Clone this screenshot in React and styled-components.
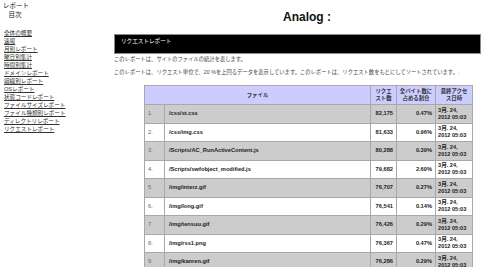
import React from "react";
import styled, { createGlobalStyle } from "styled-components";

const Global = createGlobalStyle`
  html, body { margin: 0; padding: 0; background: #fff; }
  body { font-family: "Liberation Sans", "Noto Sans CJK JP", sans-serif; color: #222; }
`;

const Page = styled.div`
  display: flex;
  width: 500px;
  height: 267px;
  overflow: hidden;
`;

const Sidebar = styled.nav`
  width: 114px;
  flex: none;
  padding: 1px 0 0 4px;
  box-sizing: border-box;
`;

const SideHead = styled.div`
  width: 24px;
  text-align: center;
  font-size: 6.5px;
  line-height: 9px;
  color: #111;
  margin-left: -1px;
  white-space: nowrap;
`;

const LinkList = styled.ul`
  list-style: none;
  margin: 10px 0 0;
  padding: 0;
  display: flex;
  flex-direction: column;
  font-size: 5.6px;
  line-height: 8px;
`;

const LinkItem = styled.li`
  height: 8px;
  line-height: 8px;
`;

const SideLink = styled.a`
  font-size: 5.6px;
  line-height: 8px;
  color: #333;
  text-decoration: underline;
  white-space: nowrap;
`;

const Main = styled.main`
  flex: 1;
  display: flex;
  flex-direction: column;
`;

const Title = styled.h1`
  margin: 10px 0 0;
  text-align: center;
  font-size: 12px;
  line-height: 14px;
  font-weight: bold;
  color: #111;
`;

const SectionBar = styled.div`
  margin-top: 10px;
  width: 367px;
  height: 20px;
  flex: none;
  box-sizing: border-box;
  background: #000;
  border: 1px solid #8a8a8a;
  color: #fff;
  font-size: 5.6px;
  line-height: 8px;
  padding: 2px 0 0 6px;
`;

const Note = styled.p`
  margin: 0;
  font-size: 5.3px;
  line-height: 8px;
  color: #444;
  white-space: nowrap;
`;

const Notes = styled.div`
  display: flex;
  flex-direction: column;
  gap: 5px;
  margin-top: 1px;
`;

const Table = styled.table`
  margin: 9px 0 0 30px;
  border-collapse: collapse;
  width: 329px;
  table-layout: fixed;
  font-size: 5.7px;
`;

const Th = styled.th`
  background: #ccccff;
  border: 1px solid #a8a8a8;
  height: 18px;
  font-weight: bold;
  font-size: 5.4px;
  line-height: 7px;
  color: #333;
  padding: 0 2px;
  text-align: center;
  vertical-align: middle;
`;

const Tr = styled.tr`
  background: ${(p) => (p.$shade ? "#cccccc" : "#ffffff")};
  height: 18.5px;
`;

const Td = styled.td`
  border: 1px solid #a8a8a8;
  padding: 0 ${(p) => p.$pr || 3}px 0 ${(p) => p.$pl || 3}px;
  text-align: ${(p) => p.$align || "left"};
  font-weight: ${(p) => (p.$bold ? "bold" : "normal")};
  color: ${(p) => (p.$bold ? "#222" : "#666")};
  line-height: 7px;
  vertical-align: middle;
  white-space: nowrap;
`;

const DateCell = styled(Td)`
  font-size: 5.6px;
`;

const links = [
  "全体の概要",
  "速報",
  "月別レポート",
  "曜日別集計",
  "時間別集計",
  "ドメインレポート",
  "組織別レポート",
  "OSレポート",
  "状態コードレポート",
  "ファイルサイズレポート",
  "ファイル種類別レポート",
  "ディレクトリレポート",
  "リクエストレポート",
];

const rows = [
  ["/css/st.css", "82,175", "0.47%"],
  ["/css/img.css", "81,633", "0.96%"],
  ["/Scripts/AC_RunActiveContent.js", "80,288", "0.39%"],
  ["/Scripts/swfobject_modified.js", "79,682", "2.60%"],
  ["/img/interz.gif", "76,707", "0.27%"],
  ["/img/long.gif", "76,541", "0.14%"],
  ["/img/tensuu.gif", "76,426", "0.29%"],
  ["/img/rss1.png", "76,367", "0.47%"],
  ["/img/kanren.gif", "76,286", "0.29%"],
];

export default function App() {
  return (
    <>
      <Global />
      <Page>
        <Sidebar>
          <SideHead>レポート<br />目次</SideHead>
          <LinkList>
            {links.map((l) => (
              <LinkItem key={l}>
                <SideLink href="#">{l}</SideLink>
              </LinkItem>
            ))}
          </LinkList>
        </Sidebar>
        <Main>
          <Title>Analog :</Title>
          <SectionBar>リクエストレポート</SectionBar>
          <Notes>
            <Note>このレポートは、サイトのファイルの統計を表します。</Note>
            <Note>
              このレポートは、リクエスト単位で、20 %を上回るデータを表示しています。このレポートは、リクエスト数をもとにしてソートされています。.
            </Note>
          </Notes>
          <Table>
            <colgroup>
              <col style={{ width: 20 }} />
              <col style={{ width: 206 }} />
              <col style={{ width: 26 }} />
              <col style={{ width: 39 }} />
              <col style={{ width: 37 }} />
            </colgroup>
            <thead>
              <tr>
                <Th colSpan={2}>ファイル</Th>
                <Th>リクエスト数</Th>
                <Th>全バイト数に占める割合</Th>
                <Th>最終アクセス日時</Th>
              </tr>
            </thead>
            <tbody>
              {rows.map((r, i) => (
                <Tr key={r[0]} $shade={i % 2 === 0}>
                  <Td>{i + 1}.</Td>
                  <Td $bold $pl={4}>{r[0]}</Td>
                  <Td $bold $align="right">{r[1]}</Td>
                  <Td $bold $align="right">{r[2]}</Td>
                  <DateCell $bold $pl={2}>3月. 24,<br />2012 05:03</DateCell>
                </Tr>
              ))}
            </tbody>
          </Table>
        </Main>
      </Page>
    </>
  );
}
